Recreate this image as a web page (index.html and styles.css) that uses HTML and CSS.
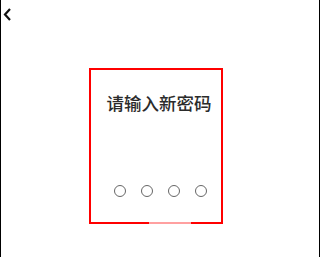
FILE: index.html
```html
<!DOCTYPE html>
<html lang="zh">
<head>
<meta charset="utf-8">
<link rel="stylesheet" href="styles.css">
</head>
<body>
<div class="screen">
  <div class="top">
    <svg class="back" width="9" height="13" viewBox="0 0 9 13"><path d="M7 1 L2 6.5 L7 12" fill="none" stroke="#111" stroke-width="2.2"/></svg>
  </div>
  <div class="content">
    <div class="title">请输入新密码</div>
    <div class="dots">
      <span class="dot"></span><span class="dot"></span><span class="dot"></span><span class="dot"></span>
    </div>
  </div>
  <div class="frame"><span class="fade"></span></div>
</div>
</body>
</html>
```
FILE: styles.css
```css
html, body { margin: 0; padding: 0; background: #fff; }
.screen {
  width: 320px; height: 257px; box-sizing: border-box;
  border-left: 1px solid #000; border-right: 1px solid #000;
  position: relative; overflow: hidden;
  font-family: "Noto Sans CJK SC", "Noto Sans", sans-serif;
}
.top { height: 30px; display: flex; align-items: center; padding-left: 2px; }
.back { display: block; margin-top: -1px; }
.content { display: flex; flex-direction: column; align-items: center; padding-top: 61px; }
.title { font-size: 17.5px; line-height: 24px; color: #2b2b2b; font-weight: 500; margin-left: -2px; }
.dots { display: flex; gap: 15px; margin-top: 70px; }
.dot { width: 12px; height: 12px; box-sizing: border-box; border: 1.5px solid #666; border-radius: 50%; }
.frame {
  position: absolute; left: 88px; top: 68px; width: 134px; height: 156px;
  box-sizing: border-box; border: 2px solid #ff0000;
}
.fade {
  position: absolute; left: 58px; bottom: -2px; width: 42px; height: 2px;
  background: #ffa0a0;
}
```
